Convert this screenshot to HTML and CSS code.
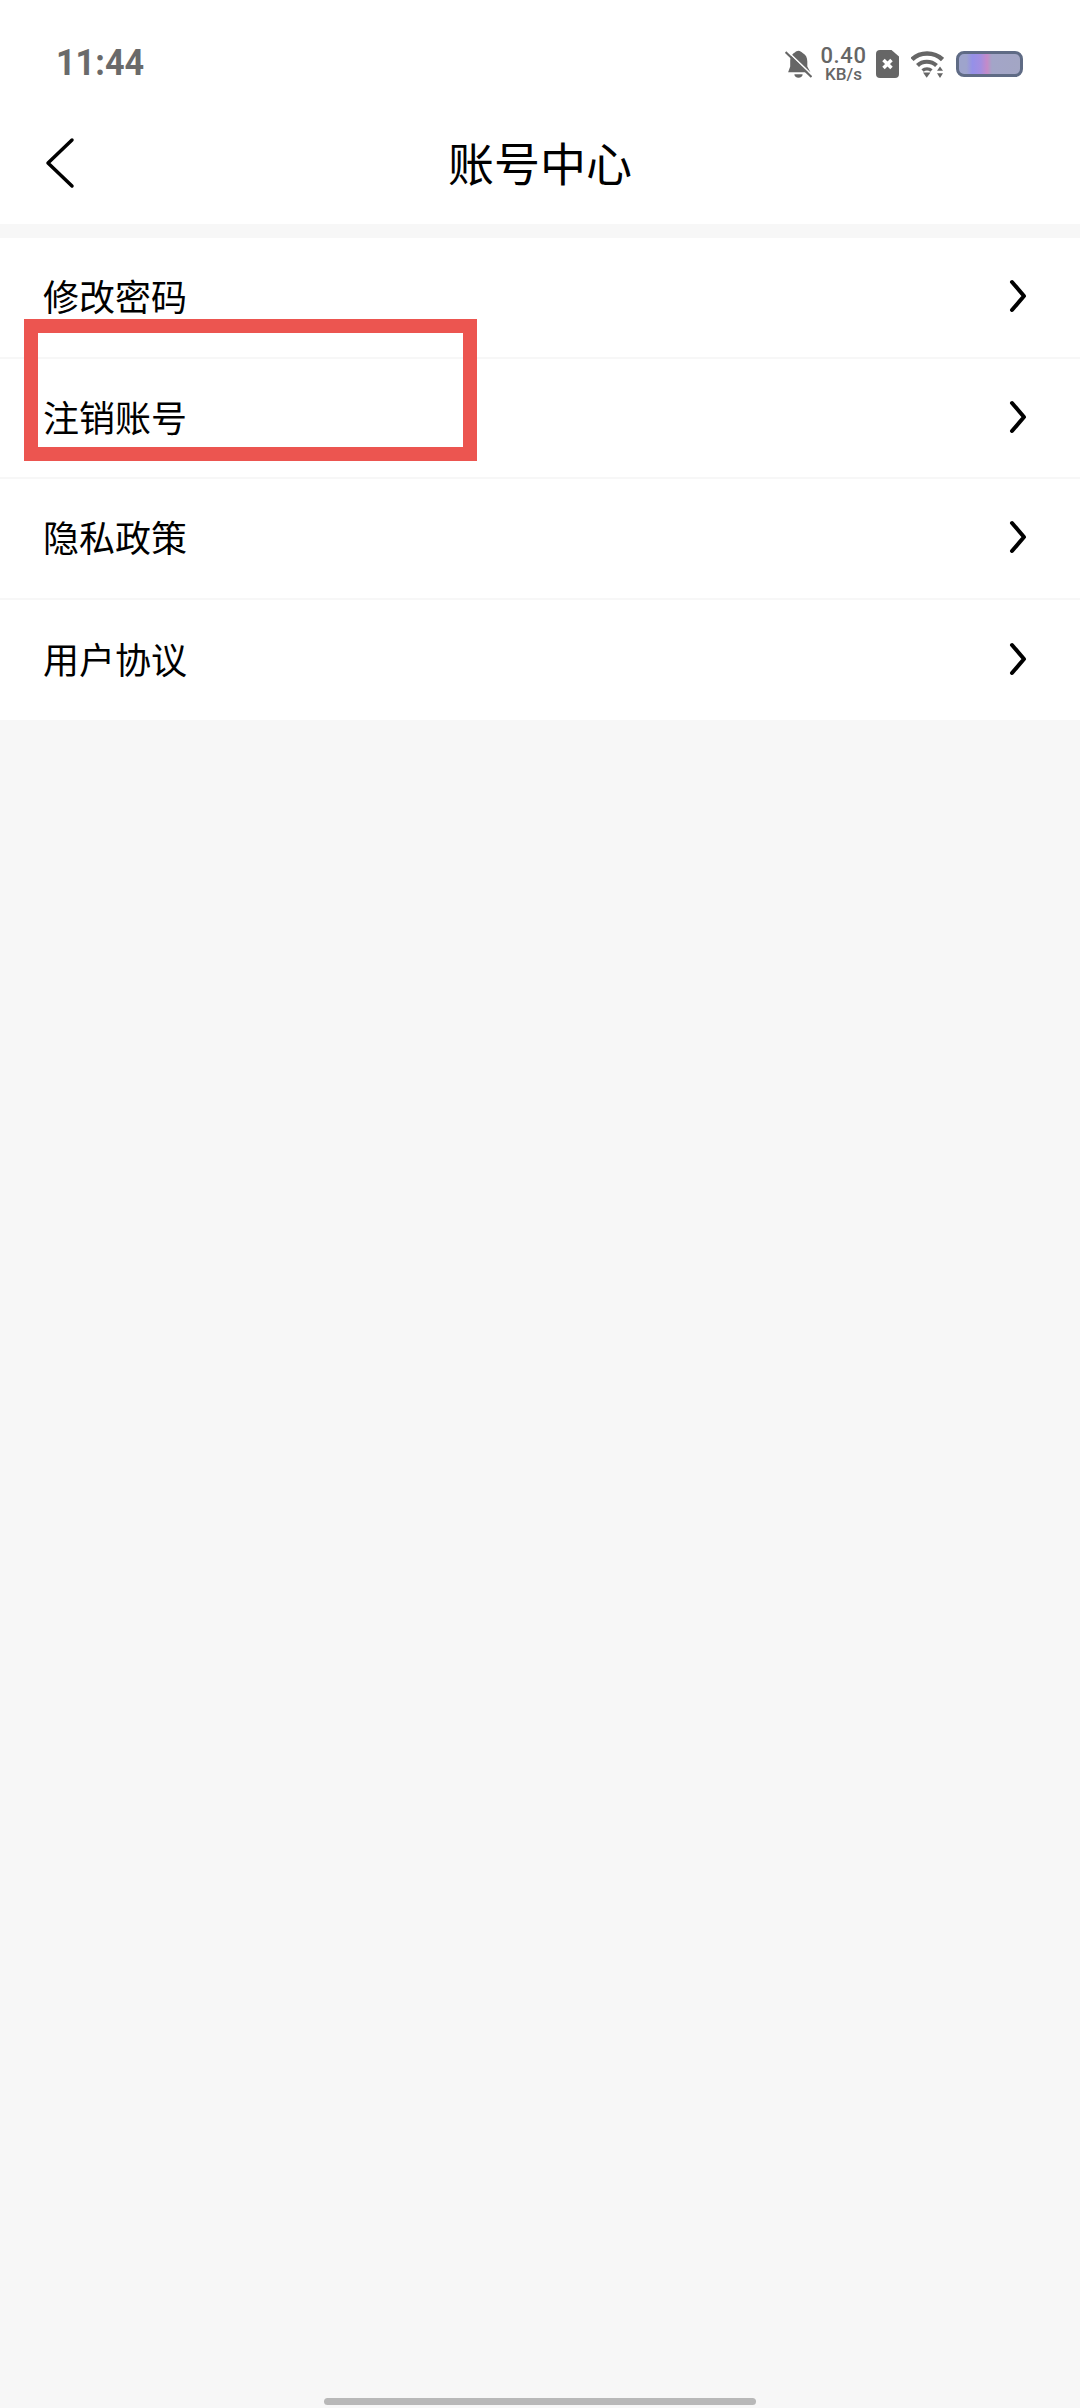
FILE: index.html
```html
<!DOCTYPE html>
<html lang="zh-CN">
<head>
    <meta charset="UTF-8">
    <meta name="viewport" content="width=device-width, initial-scale=1.0">
    <title>账号中心</title>
    <link rel="stylesheet" href="styles.css">
</head>
<body>
    <div class="page">
        <!-- 상태바 -->
        <div class="status">
            <span class="time">11:44</span>
            <div class="status-icons">
                <svg class="ic-bell" width="27" height="28" viewBox="0 0 26 27">
                    <path d="M11 1.500c1-1 3-1 4 0 1 .5 1.500 1 2 1.500 3 1.500 4.500 4.500 4.500 8v5l3 5.500H3l2-5.500v-5c0-4 2-7.500 4.500-8.500.5-.5 1-1 1.500-1.500z" fill="#666"/>
                    <path d="M9 23.500h8c0 2-1.800 3.300-4 3.300s-4-1.300-4-3.300z" fill="#666"/>
                    <path d="M1.500 0.500l25 24" stroke="#fff" stroke-width="1.500"/>
                    <path d="M0.500 2l25 24" stroke="#666" stroke-width="2"/>
                </svg>
                <div class="speed">
                    <span class="speed-num">0.40</span>
                    <span class="speed-unit">KB/s</span>
                </div>
                <svg class="ic-sim" width="23" height="28" viewBox="0 0 23 28">
                    <path d="M4 0h11.500L23 6.500V24a4 4 0 0 1-4 4H4a4 4 0 0 1-4-4V4a4 4 0 0 1 4-4z" fill="#666"/>
                    <path d="M7.500 10l8 8M15.500 10l-8 8" stroke="#fff" stroke-width="3.500"/>
                </svg>
                <svg class="ic-wifi" width="33" height="27" viewBox="0 0 33 27">
                    <path d="M1 8.500C9 0.500 23 0.500 31.500 8.500" fill="none" stroke="#666" stroke-width="4.500"/>
                    <path d="M6.500 14.500C11.500 9.500 20 9.500 25.500 14.500" fill="none" stroke="#666" stroke-width="4.200"/>
                    <path d="M11.500 19.500C14 17.500 18 17.500 20.500 19.500" fill="none" stroke="#666" stroke-width="3.500"/>
                    <path d="M12 21.500h7.500L15.700 26.800z" fill="#666"/>
                    <path d="M29 15.500l3 4.200h-6zM29 27l-3-4.700h6z" fill="#666"/>
                </svg>
                <div class="battery"></div>
            </div>
        </div>

        <!-- 헤더 -->
        <header class="topbar">
            <svg class="back" width="30" height="52" viewBox="0 0 30 52">
                <path d="M27 3L3 26 27 49" fill="none" stroke="#000" stroke-width="3.500" stroke-linecap="round" stroke-linejoin="round"/>
            </svg>
            <h1 class="title">账号中心</h1>
        </header>

        <!-- 메뉴 -->
        <ul class="menu">
            <li class="menu-item">
                <span>修改密码</span>
                <svg class="arrow" width="18" height="34" viewBox="0 0 18 34"><path d="M3 3l12 14L3 31" fill="none" stroke="#000" stroke-width="4" stroke-linecap="round" stroke-linejoin="round"/></svg>
            </li>
            <li class="menu-item">
                <span>注销账号</span>
                <svg class="arrow" width="18" height="34" viewBox="0 0 18 34"><path d="M3 3l12 14L3 31" fill="none" stroke="#000" stroke-width="4" stroke-linecap="round" stroke-linejoin="round"/></svg>
            </li>
            <li class="menu-item">
                <span>隐私政策</span>
                <svg class="arrow" width="18" height="34" viewBox="0 0 18 34"><path d="M3 3l12 14L3 31" fill="none" stroke="#000" stroke-width="4" stroke-linecap="round" stroke-linejoin="round"/></svg>
            </li>
            <li class="menu-item">
                <span>用户协议</span>
                <svg class="arrow" width="18" height="34" viewBox="0 0 18 34"><path d="M3 3l12 14L3 31" fill="none" stroke="#000" stroke-width="4" stroke-linecap="round" stroke-linejoin="round"/></svg>
            </li>
        </ul>

        <div class="home-bar"></div>

        <!-- 빨간 표시 상자 -->
        <div class="mark"></div>
    </div>
</body>
</html>
```

FILE: styles.css
```css
* {margin:0; padding:0; box-sizing:border-box;}
html, body {width:1080px; height:2408px; overflow:hidden;}
body {background-color:#f7f7f7; font-family:"Noto Sans CJK SC", "Noto Sans", sans-serif; color:#000;}

.page {position:relative; width:1080px; height:2408px; display:flex; flex-direction:column;}

/* status bar */
.status {
    height:100px; background-color:#fff;
    display:flex; justify-content:space-between; align-items:flex-start;
    padding:42px 57px 0 56px;
}
.time {
    font-family:Roboto, sans-serif; font-weight:700; font-size:36px; line-height:42px; color:#6a6a6a;
    transform:scaleX(0.95); transform-origin:left center;
}
.status-icons {display:flex; align-items:center; height:44px;}
.ic-bell {margin-right:9px;}
.speed {width:45px; display:flex; flex-direction:column; align-items:center; color:#666; font-family:Roboto, sans-serif; font-weight:500; margin-right:10px;}
.speed-num {font-size:22px; line-height:21px; letter-spacing:0.6px;}
.speed-unit {font-size:17px; line-height:17px;}
.ic-sim {margin-right:12px;}
.ic-wifi {margin-right:12px;}
.battery {
    width:67px; height:26px; border:3px solid #5f6b85; border-radius:8px;
    background:linear-gradient(90deg, #9ea4cc 0, #9ea4cc 12%, #9590e8 22%, #a48ee0 36%, #c58ac8 46%, #a3a5c8 54%, #a3a6c4 100%);
}

/* header */
.topbar {
    position:relative; height:124px; padding-bottom:3px; background-color:#fff;
    display:flex; align-items:center; justify-content:center;
}
.back {position:absolute; left:45px; top:37px;}
.title {font-size:46px; font-weight:400; line-height:60px;}

/* menu */
.menu {list-style:none; margin-top:14px; background-color:#fff;}
.menu-item {
    height:120.5px; padding:0 53px 4px 43px;
    display:flex; align-items:center; justify-content:space-between;
    font-size:36px; border-bottom:2px solid #f7f7f7;
}
.menu-item:last-child {border-bottom:0;}
.arrow {margin-top:2px;}

.home-bar {
    position:absolute; left:324px; bottom:3px;
    width:432px; height:7px; border-radius:4px; background-color:#b8b8b8;
}
.mark {
    position:absolute; left:24px; top:319px;
    width:453px; height:142px; border:14px solid #ec5550;
}
```
